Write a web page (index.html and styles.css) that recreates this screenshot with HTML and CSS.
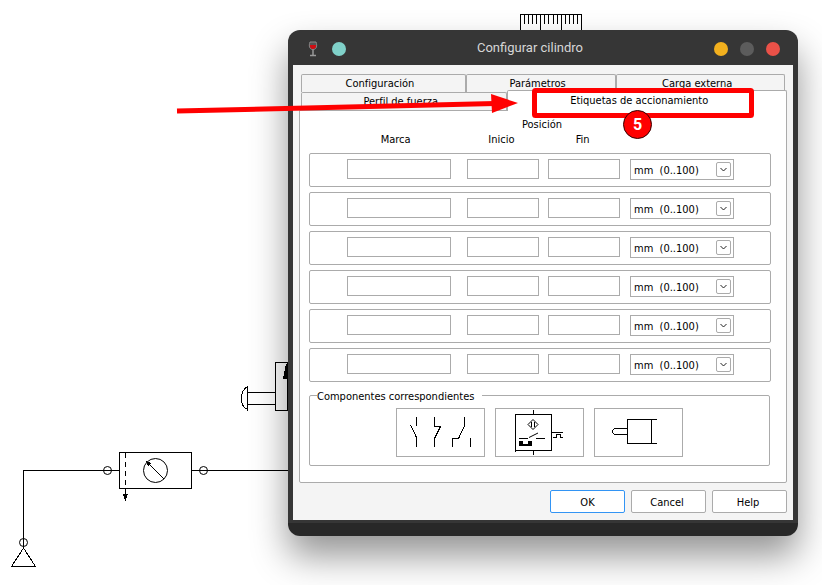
FILE: index.html
```html
<!DOCTYPE html>
<html lang="es">
<head>
<meta charset="utf-8">
<meta name="viewport" content="width=device-width, initial-scale=1">
<title>Configurar cilindro</title>
<link rel="stylesheet" href="styles.css">
</head>
<body>
<svg class="circuit" width="822" height="585" aria-hidden="true">
  <!-- cylinder ruler -->
  <path d="M520.5 30V14.5H581.5V30M540.5 14V30M561.5 14V30M524.5 14V24M528.5 14V24M532.5 14V24M536.5 14V24M544.5 14V24M548.5 14V24M553.5 14V24M557.5 14V24M565.5 14V24M569.5 14V24M573.5 14V24M577.5 14V24"/>
  <!-- push button valve -->
  <path d="M247.5 386V411M247.5 386.5C239.500 391 239.500 406 247.500 409.500M248 392.500H275M248 404.500H275M275.500 362.500H300M275.500 362V411M275.500 410.500H300M287.500 362V411"/>
  <path class="solid" d="M288 362L286 364L283 379H289Z"/>
  <!-- supply line and service unit -->
  <path d="M23.5 548V470.5H119M192 470.5H300M119.5 452.5H191.5V488.5H119.5ZM125.500 489V501M23.500 548L11.500 566.500H35.500Z"/>
  <path stroke-dasharray="5 4" d="M125.5 453V488"/>
  <g class="smooth">
    <circle cx="107.500" cy="470.500" r="4"/>
    <circle cx="203.500" cy="470.500" r="4"/>
    <circle cx="23.500" cy="542.500" r="4"/>
    <circle cx="155.500" cy="470.500" r="12"/>
    <path d="M147 462L164 479"/>
  </g>
  <path class="solid" d="M123 494H128L126 500H125ZM146 461L151 463L148 466Z"/>
</svg>

<main class="dialog" role="dialog" aria-labelledby="title">
  <header class="titlebar">
    <div class="group">
      <svg class="glass" width="12" height="18" viewBox="0 0 12 18" aria-hidden="true">
        <path d="M3 2C1.500 6 2.500 9.500 6 9.500S10.500 6 9 2Z" fill="#555" stroke="#8a8a8a"/>
        <path d="M2.800 5H9.200C9.200 7.500 8 9 6 9S2.800 7.500 2.800 5Z" fill="#d00d12"/>
        <path d="M6 10V15M3 15.500H9" stroke="#999" stroke-width="1.500"/>
      </svg>
      <span class="dot teal"></span>
    </div>
    <h1 id="title">Configurar cilindro</h1>
    <div class="group controls">
      <button class="dot yellow" aria-label="Minimizar"></button>
      <button class="dot grey" aria-label="Maximizar"></button>
      <button class="dot red" aria-label="Cerrar"></button>
    </div>
  </header>

  <div class="content">
    <div class="tabs" role="tablist">
      <div class="tab-row back">
        <button class="tab t1" role="tab">Configuración</button>
        <button class="tab t2" role="tab">Parámetros</button>
        <button class="tab t3" role="tab">Carga externa</button>
      </div>
      <div class="tab-row front">
        <button class="tab t4" role="tab">Perfil de fuerza</button>
        <button class="tab active" role="tab" aria-selected="true">Etiquetas de accionamiento</button>
      </div>
    </div>

    <section class="panel">
      <div class="columns head">
        <span class="span" id="pos">Posición</span>
        <span class="marca" id="marca">Marca</span>
        <span id="inicio">Inicio</span>
        <span id="fin">Fin</span>
      </div>
      <div class="rows">
        <div class="columns row"><input class="marca" aria-labelledby="marca"><input aria-labelledby="pos inicio"><input aria-labelledby="pos fin"><div class="combo"><select aria-labelledby="pos"><option>mm&nbsp; (0..100)</option></select><svg width="15" height="15" aria-hidden="true"><path d="M3.500 5L6.500 8L9.500 5"/></svg></div></div>
        <div class="columns row"><input class="marca" aria-labelledby="marca"><input aria-labelledby="pos inicio"><input aria-labelledby="pos fin"><div class="combo"><select aria-labelledby="pos"><option>mm&nbsp; (0..100)</option></select><svg width="15" height="15" aria-hidden="true"><path d="M3.500 5L6.500 8L9.500 5"/></svg></div></div>
        <div class="columns row"><input class="marca" aria-labelledby="marca"><input aria-labelledby="pos inicio"><input aria-labelledby="pos fin"><div class="combo"><select aria-labelledby="pos"><option>mm&nbsp; (0..100)</option></select><svg width="15" height="15" aria-hidden="true"><path d="M3.500 5L6.500 8L9.500 5"/></svg></div></div>
        <div class="columns row"><input class="marca" aria-labelledby="marca"><input aria-labelledby="pos inicio"><input aria-labelledby="pos fin"><div class="combo"><select aria-labelledby="pos"><option>mm&nbsp; (0..100)</option></select><svg width="15" height="15" aria-hidden="true"><path d="M3.500 5L6.500 8L9.500 5"/></svg></div></div>
        <div class="columns row"><input class="marca" aria-labelledby="marca"><input aria-labelledby="pos inicio"><input aria-labelledby="pos fin"><div class="combo"><select aria-labelledby="pos"><option>mm&nbsp; (0..100)</option></select><svg width="15" height="15" aria-hidden="true"><path d="M3.500 5L6.500 8L9.500 5"/></svg></div></div>
        <div class="columns row"><input class="marca" aria-labelledby="marca"><input aria-labelledby="pos inicio"><input aria-labelledby="pos fin"><div class="combo"><select aria-labelledby="pos"><option>mm&nbsp; (0..100)</option></select><svg width="15" height="15" aria-hidden="true"><path d="M3.500 5L6.500 8L9.500 5"/></svg></div></div>
      </div>

      <fieldset class="related">
        <legend>Componentes correspondientes</legend>
        <div class="thumbs">
          <button class="thumb" aria-label="Contactos">
            <svg width="87" height="47" viewBox="1 1 87 47"><path d="M20.5 9V18M14.5 17L20.5 29.5V39M38.5 9V18.5H44.5L38.5 30.5V39M68.5 9V18L62.5 30.5H56.5V39M74.5 30V39"/></svg>
          </button>
          <button class="thumb" aria-label="Sensor">
            <svg width="87" height="47" viewBox="1 1 87 47"><path d="M20.5 6.5H56.5V42.5H20.5ZM38.500 2V6M38.500 43V47M20.500 42V44M24 30.500H33M41 30.500H50M57 24.500H68M58 29.500H61.500V26.500H65.500V29.500H68"/><path class="smooth" d="M38 11.500L43 16.500L38 21.500L33 16.500ZM36.500 14V19M39.500 14V19M34 29.500L43 25"/><path class="solid" d="M24 33H28V36H33V33H37V38H24Z"/></svg>
          </button>
          <button class="thumb" aria-label="Cilindro">
            <svg width="87" height="47" viewBox="1 1 87 47"><path d="M63 11.5H33.5V35.5H63M57.5 11V36M33 20.5H20.500L18.500 22.500V24.500L20.500 26.500H33"/></svg>
          </button>
        </div>
      </fieldset>
    </section>

    <footer class="actions">
      <button class="action primary">OK</button>
      <button class="action">Cancel</button>
      <button class="action">Help</button>
    </footer>
  </div>
</main>

<svg class="callout" width="822" height="130" aria-hidden="true">
  <path d="M177 111L495 103.500" stroke="#f00" stroke-width="5"/>
  <path d="M491 94L518 103L492 113Z" fill="#f00"/>
  <rect x="534.500" y="90.500" width="217" height="25" rx="1" fill="none" stroke="#f00" stroke-width="5" stroke-linejoin="round"/>
</svg>
<span class="step">5</span>
</body>
</html>
```
FILE: styles.css
```css
* { box-sizing: border-box; }

body {
  position: relative;
  margin: 0;
  min-height: 100vh;
  padding: 30px 24px 49px 288px;
  overflow: hidden;
  background: #fff;
  color: #000;
  font: 11px/15px "DejaVu Sans Condensed", "DejaVu Sans", sans-serif;
}

button, input, select {
  margin: 0;
  padding: 0;
  font: inherit;
  color: inherit;
  border: 1px solid #ababab;
  border-radius: 0;
  background: #fff;
}

svg {
  display: block;
  fill: none;
  stroke: #000;
}

.solid { fill: #000; stroke: none; }

.circuit, .callout {
  position: absolute;
  top: 0;
  left: 0;
}

.circuit { shape-rendering: crispEdges; }
.smooth { shape-rendering: auto; }

.callout {
  stroke: none;
  pointer-events: none;
}

.step {
  position: absolute;
  top: 110px;
  left: 623px;
  width: 29px;
  height: 29px;
  border: 1px solid #300;
  border-radius: 50%;
  background: #f00;
  color: #fff;
  font: bold 16px/28px Roboto, sans-serif;
  text-align: center;
}

.dialog {
  position: relative;
  border: solid transparent;
  border-width: 0 5px;
  border-radius: 12px;
  background: linear-gradient(#363636, #363636) top / 100% calc(100% - 13px) no-repeat #282828;
  background-origin: border-box;
  padding-bottom: 16px;
  overflow: hidden;
  box-shadow: 0 20px 36px rgba(0, 0, 0, .42);
}

.titlebar {
  display: flex;
  align-items: center;
  height: 35px;
  padding: 3px 13px 0 14px;
}

.titlebar h1 {
  flex: 1;
  margin: 0;
  color: #d6d6d6;
  font: 13px/16px Roboto, sans-serif;
  text-align: center;
  padding-bottom: 3px;
}

.group {
  display: flex;
  align-items: center;
  gap: 13px;
}

.controls { gap: 12px; }
.glass { stroke: none; }

.dot {
  width: 14px;
  height: 14px;
  border: 0;
  border-radius: 50%;
}

.teal { background: #80d1c9; }
.yellow { background: #f2b01e; }
.grey { background: #5c5c5c; }
.red { background: #ea5148; }

.content {
  padding: 9px 6px 7px;
  background: #f4f4f4;
}

.tabs { padding-left: 2px; }
.tab-row { display: flex; }
.back { padding-right: 2px; }

.tab {
  flex: 1;
  height: 18px;
  padding-right: 7px;
  border-bottom: 0;
  border-radius: 2px 2px 0 0;
  background: #f4f4f4;
}

.t1 { flex: 165; }
.t2 { flex: 150; }
.t3 { flex: 169; }
.t4 { flex: 209; }

.active {
  position: relative;
  flex: 277;
  height: 21px;
  margin: -2px 0 -1px;
  padding: 0 16px 2px 0;
  background: #fff;
}

.panel {
  padding: 6px 15px 16px 9px;
  border: 1px solid #ababab;
  border-radius: 0 0 2px 2px;
  background: #fff;
}

.columns {
  display: grid;
  grid-template-columns: 111fr 72fr 72fr 105fr;
  column-gap: 9px;
  padding: 0 36px 0 37px;
}

.columns input {
  width: 100%;
  min-width: 0;
  height: 20px;
  padding: 0 4px;
}

.columns .marca {
  width: auto;
  margin-right: 7px;
}

.head {
  padding: 0 38px 0 36px;
  text-align: center;
}

.span { grid-column: 2 / 4; }

.head .marca {
  grid-column: 1;
  margin-right: 10px;
}

.rows {
  display: grid;
  gap: 5px;
  margin-top: 6px;
}

.row {
  height: 34px;
  padding-top: 5px;
  border: 1px solid #ababab;
  border-radius: 2px;
}

.combo {
  position: relative;
  height: 21px;
  margin-left: 1px;
}

.combo select {
  display: block;
  width: 100%;
  height: 100%;
  padding: 2px 22px 0 3px;
  appearance: none;
}

.combo svg {
  position: absolute;
  top: 3px;
  right: 3px;
  border: 1px solid #ababab;
  border-radius: 2px;
  pointer-events: none;
  stroke: #222;
}

.related {
  min-width: 0;
  margin: 4px 1px 0 0;
  padding: 4px 0 8px;
  border: 1px solid #ababab;
  border-radius: 2px;
}

.related legend {
  margin-left: 7px;
  padding: 3px 8px 0 0;
}

.thumbs {
  display: flex;
  justify-content: center;
  gap: 10px;
}

.thumb {
  width: 89px;
  height: 49px;
}

.thumb svg { shape-rendering: crispEdges; }
.thumb .smooth { shape-rendering: auto; }

.actions {
  display: flex;
  justify-content: flex-end;
  gap: 6px;
  margin-top: 7px;
}

.action {
  width: 75px;
  height: 23px;
  padding: 1px 3px 0 0;
  border-radius: 2px;
}

.primary {
  padding-right: 0;
  border-color: #3294f4;
}
```
